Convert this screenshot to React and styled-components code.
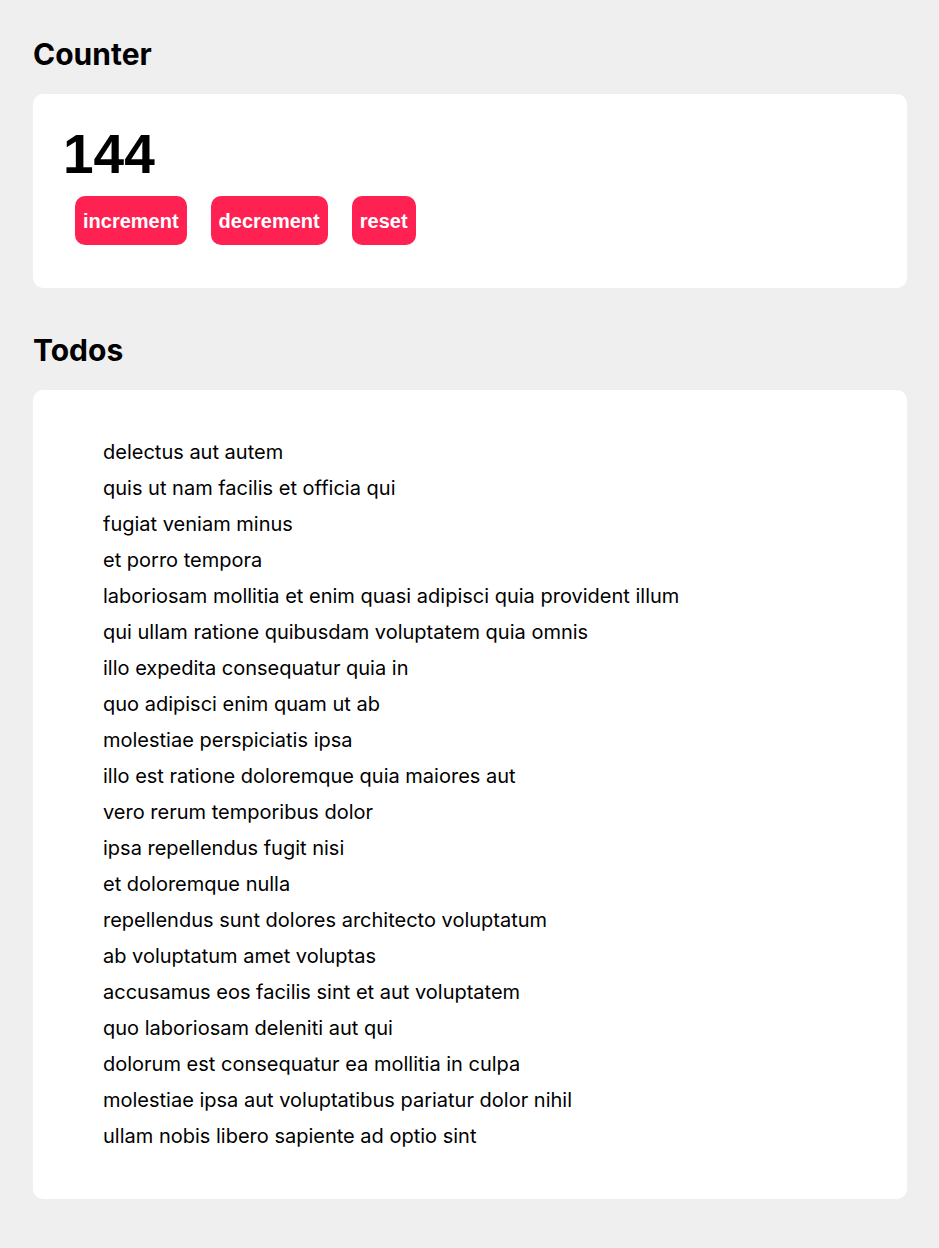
import React from 'react';
import styled, {createGlobalStyle} from 'styled-components';

const GlobalStyle = createGlobalStyle`
  html, body {
    margin: 0;
    padding: 0;
    background: #efefef;
  }

  body {
    font-family: Inter, "Noto Sans", sans-serif;
    color: #000;
  }
`;

const Page = styled.div`
  padding: 37px 32px 50px 33px;
`;

const Section = styled.section`
  & + & {
    margin-top: 45px;
  }
`;

const SectionTitle = styled.h2`
  margin: 0 0 23px 0;
  font-size: 30px;
  line-height: 34px;
  font-weight: 700;
`;

const Card = styled.div`
  background: #fff;
  border-radius: 10px;
  padding: 25px 30px;
`;

const Count = styled.h1`
  margin: 3px 0 0;
  font-family: "Liberation Sans", Arial, sans-serif;
  font-size: 55px;
  line-height: 64px;
  font-weight: 700;
`;

const Buttons = styled.div`
  display: flex;
  margin: 10px 0 18px;
`;

const Button = styled.button`
  margin: 0 12px;
  padding: 14px 8px 12px;
  border: 0;
  border-radius: 10px;
  background: #fe2152;
  color: #fff;
  font-family: "Liberation Sans", Arial, sans-serif;
  font-weight: 700;
  font-size: 20px;
  line-height: 23px;
  cursor: pointer;
`;

const TodoList = styled.ul`
  margin: 19px 0 20px;
  padding: 0 0 0 40px;
  list-style: none;
`;

const TodoItem = styled.li`
  font-size: 20px;
  line-height: 36px;
`;

const todos = [
  'delectus aut autem',
  'quis ut nam facilis et officia qui',
  'fugiat veniam minus',
  'et porro tempora',
  'laboriosam mollitia et enim quasi adipisci quia provident illum',
  'qui ullam ratione quibusdam voluptatem quia omnis',
  'illo expedita consequatur quia in',
  'quo adipisci enim quam ut ab',
  'molestiae perspiciatis ipsa',
  'illo est ratione doloremque quia maiores aut',
  'vero rerum temporibus dolor',
  'ipsa repellendus fugit nisi',
  'et doloremque nulla',
  'repellendus sunt dolores architecto voluptatum',
  'ab voluptatum amet voluptas',
  'accusamus eos facilis sint et aut voluptatem',
  'quo laboriosam deleniti aut qui',
  'dolorum est consequatur ea mollitia in culpa',
  'molestiae ipsa aut voluptatibus pariatur dolor nihil',
  'ullam nobis libero sapiente ad optio sint',
];

function Counter() {
  const [count, setCount] = React.useState(144);

  return (
    <Section>
      <SectionTitle>Counter</SectionTitle>
      <Card>
        <Count>{count}</Count>
        <Buttons>
          <Button onClick={() => setCount(c => c + 1)}>increment</Button>
          <Button onClick={() => setCount(c => c - 1)}>decrement</Button>
          <Button onClick={() => setCount(0)}>reset</Button>
        </Buttons>
      </Card>
    </Section>
  );
}

function Todos() {
  return (
    <Section>
      <SectionTitle>Todos</SectionTitle>
      <Card>
        <TodoList>
          {todos.map((todo, idx) => (
            <TodoItem key={idx}>{todo}</TodoItem>
          ))}
        </TodoList>
      </Card>
    </Section>
  );
}

export default function App() {
  return (
    <Page>
      <GlobalStyle />
      <Counter />
      <Todos />
    </Page>
  );
}
